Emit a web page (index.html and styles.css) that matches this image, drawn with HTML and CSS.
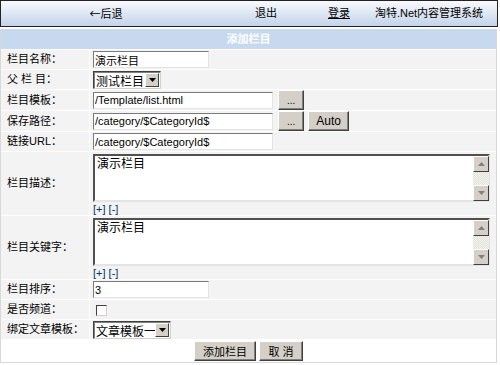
FILE: index.html
```html
<!DOCTYPE html>
<html>
<head>
  <title>添加栏目</title>
  <link rel="stylesheet" href="styles.css">
</head>
<body>
<!-- top navigation -->
<div class="topbar">
  <span><span class="arrow">←</span>后退</span>
  <span>退出</span>
  <span class="login">登录</span>
  <span class="sys">淘特.Net内容管理系统</span>
</div>

<form id="column-form">
<table class="form-table">
  <tr>
    <td colspan="2" class="title">添加栏目</td>
  </tr>
  <tr>
    <td class="label">栏目名称：</td>
    <td class="field"><input type="text" class="txt short" value="演示栏目"></td>
  </tr>
  <tr>
    <td class="label">父 栏 目：</td>
    <td class="field">
      <span class="select-wrap w-parent">
        <select class="sel"><option>测试栏目</option></select>
        <span class="drop"><svg width="7" height="4" viewBox="0 0 7 4"><path d="M0 0h7L3.5 4z" fill="#000"/></svg></span>
      </span>
    </td>
  </tr>
  <tr>
    <td class="label">栏目模板：</td>
    <td class="field">
      <input type="text" class="txt long" value="/Template/list.html">
      <button type="button" class="btn dots">...</button>
    </td>
  </tr>
  <tr>
    <td class="label">保存路径：</td>
    <td class="field">
      <input type="text" class="txt long" value="/category/$CategoryId$">
      <button type="button" class="btn dots">...</button>
      <button type="button" class="btn auto">Auto</button>
    </td>
  </tr>
  <tr>
    <td class="label">链接URL：</td>
    <td class="field"><input type="text" class="txt long" value="/category/$CategoryId$"></td>
  </tr>
  <tr>
    <td class="label">栏目描述：</td>
    <td class="field area-cell">
      <div class="area-wrap">
        <textarea class="area">演示栏目</textarea>
        <div class="fake-scroll">
          <span class="sb-btn"><svg width="7" height="4" viewBox="0 0 7 4"><path d="M0 4h7L3.5 0z" fill="#808080"/></svg></span>
          <span class="sb-track"></span>
          <span class="sb-btn"><svg width="7" height="4" viewBox="0 0 7 4"><path d="M0 0h7L3.5 4z" fill="#808080"/></svg></span>
        </div>
      </div>
      <div class="resize"><a href="#">[+]</a> <a href="#">[-]</a></div>
    </td>
  </tr>
  <tr>
    <td class="label">栏目关键字：</td>
    <td class="field area-cell">
      <div class="area-wrap">
        <textarea class="area">演示栏目</textarea>
        <div class="fake-scroll">
          <span class="sb-btn"><svg width="7" height="4" viewBox="0 0 7 4"><path d="M0 4h7L3.5 0z" fill="#808080"/></svg></span>
          <span class="sb-track"></span>
          <span class="sb-btn"><svg width="7" height="4" viewBox="0 0 7 4"><path d="M0 0h7L3.5 4z" fill="#808080"/></svg></span>
        </div>
      </div>
      <div class="resize"><a href="#">[+]</a> <a href="#">[-]</a></div>
    </td>
  </tr>
  <tr>
    <td class="label">栏目排序：</td>
    <td class="field"><input type="text" class="txt short" value="3"></td>
  </tr>
  <tr>
    <td class="label">是否频道：</td>
    <td class="field"><input type="checkbox" class="chk"></td>
  </tr>
  <tr>
    <td class="label">绑定文章模板：</td>
    <td class="field">
      <span class="select-wrap w-tpl">
        <select class="sel"><option>文章模板一</option></select>
        <span class="drop"><svg width="7" height="4" viewBox="0 0 7 4"><path d="M0 0h7L3.5 4z" fill="#000"/></svg></span>
      </span>
    </td>
  </tr>
  <tr>
    <td colspan="2" class="actions">
      <button type="button" class="btn submit">添加栏目</button>
      <button type="button" class="btn cancel">取 消</button>
    </td>
  </tr>
</table>
</form>
</body>
</html>
```

FILE: styles.css
```css
/* base */
body {
  margin: 0;
  font-family: "Liberation Sans", "Noto Sans CJK SC", sans-serif;
  font-size: 11px;
  color: #000;
}

/* top navigation bar */
.topbar {
  width: 496px;
  height: 25px;
  border: 1px solid #222;
  background: linear-gradient(#f8fafd, #c3d3ea);
  display: grid;
  grid-template-columns: 210px 110px 36px 1fr;
  align-items: center;
  text-align: center;
  line-height: 13px;
}

.topbar .arrow {
  font-family: "Noto Sans CJK SC", sans-serif;
}

.topbar .login {
  text-decoration: underline;
}

.topbar .sys {
  padding-left: 4px;
}

/* form table */
.form-table {
  margin-top: 2px;
  width: 497px;
  border-collapse: separate;
  border-spacing: 0;
  border: 1px solid #d8d8d8;
  border-top: none;
  background: #f3f3f3;
  line-height: 13px;
}

.form-table td {
  border-bottom: 1px solid #fff;
  height: 19px;
  padding: 0 3px;
}

.form-table .title {
  background: #c6d9ef;
  color: #fff;
  font-weight: bold;
  text-align: center;
  height: 20px;
}

.form-table .label {
  width: 80px;
  padding: 0 2px 0 6px;
  border-right: 1px solid #fff;
  white-space: nowrap;
}

.form-table .field {
  padding-left: 3px;
}

/* inputs */
.txt {
  box-sizing: border-box;
  height: 17px;
  margin: 0;
  padding: 0 1px;
  border: 1px solid;
  border-color: #7a7a7a #e4e4e4 #e4e4e4 #7a7a7a;
  background: #fff;
  font-family: "Liberation Sans", "Noto Sans CJK SC", sans-serif;
  font-size: 11px;
  vertical-align: middle;
}

.txt.short {
  width: 116px;
}

.txt.long {
  width: 180px;
}

/* buttons */
.btn {
  box-sizing: border-box;
  height: 20px;
  margin: 0;
  padding: 0 4px;
  background: #d4d0c8;
  border: 1px solid;
  border-color: #fff #404040 #404040 #fff;
  box-shadow: inset -1px -1px #808080;
  font-family: "Liberation Sans", "Noto Sans CJK SC", sans-serif;
  font-size: 11px;
  color: #000;
  vertical-align: middle;
}

.btn.dots {
  width: 26px;
  margin-left: 2px;
  font-size: 10px;
}

.btn.auto {
  width: 41px;
  margin-left: 1px;
  font-size: 12px;
}

/* select */
.select-wrap {
  position: relative;
  display: inline-block;
  vertical-align: middle;
}

.sel {
  appearance: none;
  -webkit-appearance: none;
  box-sizing: border-box;
  display: block;
  height: 18px;
  margin: 0;
  padding: 0 0 0 2px;
  border: 1px solid;
  border-color: #404040 #d4d0c8 #d4d0c8 #404040;
  box-shadow: inset 1px 1px #808080;
  background: #fff;
  font-family: "Noto Sans CJK SC", sans-serif;
  font-size: 12px;
  color: #000;
  border-radius: 0;
}

.w-parent .sel {
  width: 68px;
}

.w-tpl .sel {
  width: 78px;
}

.drop {
  position: absolute;
  right: 2px;
  top: 2px;
  width: 14px;
  height: 14px;
  box-sizing: border-box;
  background: #d4d0c8;
  border: 1px solid;
  border-color: #fff #404040 #404040 #fff;
  display: flex;
  align-items: center;
  justify-content: center;
  pointer-events: none;
}

/* checkbox */
.chk {
  appearance: none;
  -webkit-appearance: none;
  width: 11px;
  height: 11px;
  margin: 0 0 0 3px;
  border: 1px solid;
  border-color: #404040 #d4d0c8 #d4d0c8 #404040;
  background: #fff;
  vertical-align: middle;
}

/* textareas */
.form-table .area-cell {
  padding-top: 2px;
  padding-bottom: 0;
  height: auto;
}

.area-wrap {
  position: relative;
  width: 397px;
  height: 48px;
}

.area {
  box-sizing: border-box;
  display: block;
  width: 397px;
  height: 48px;
  margin: 0;
  padding: 0 18px 0 2px;
  border: 2px solid;
  border-color: #505050 #e4e4e4 #e4e4e4 #505050;
  background: #fff;
  font-family: "Noto Sans CJK SC", sans-serif;
  font-size: 12px;
  line-height: 14px;
  resize: none;
  overflow: hidden;
}

.fake-scroll {
  position: absolute;
  right: 1px;
  top: 2px;
  bottom: 1px;
  width: 16px;
  display: flex;
  flex-direction: column;
}

.sb-btn {
  box-sizing: border-box;
  height: 16px;
  background: #d4d0c8;
  border: 1px solid;
  border-color: #fff #404040 #404040 #fff;
  display: flex;
  align-items: center;
  justify-content: center;
}

.sb-track {
  flex: 1;
  background: repeating-conic-gradient(#f4f3ee 0 25%, #e2e0d8 0 50%) 0 0 / 2px 2px;
}

.resize {
  margin-top: 2px;
  line-height: 11px;
}

.resize a {
  color: #003366;
  text-decoration: none;
}

/* bottom buttons row */
.form-table .actions {
  background: #fff;
  text-align: center;
  height: 22px;
  border-bottom: none;
}

.btn.submit {
  width: 62px;
}

.btn.cancel {
  width: 44px;
}
```
